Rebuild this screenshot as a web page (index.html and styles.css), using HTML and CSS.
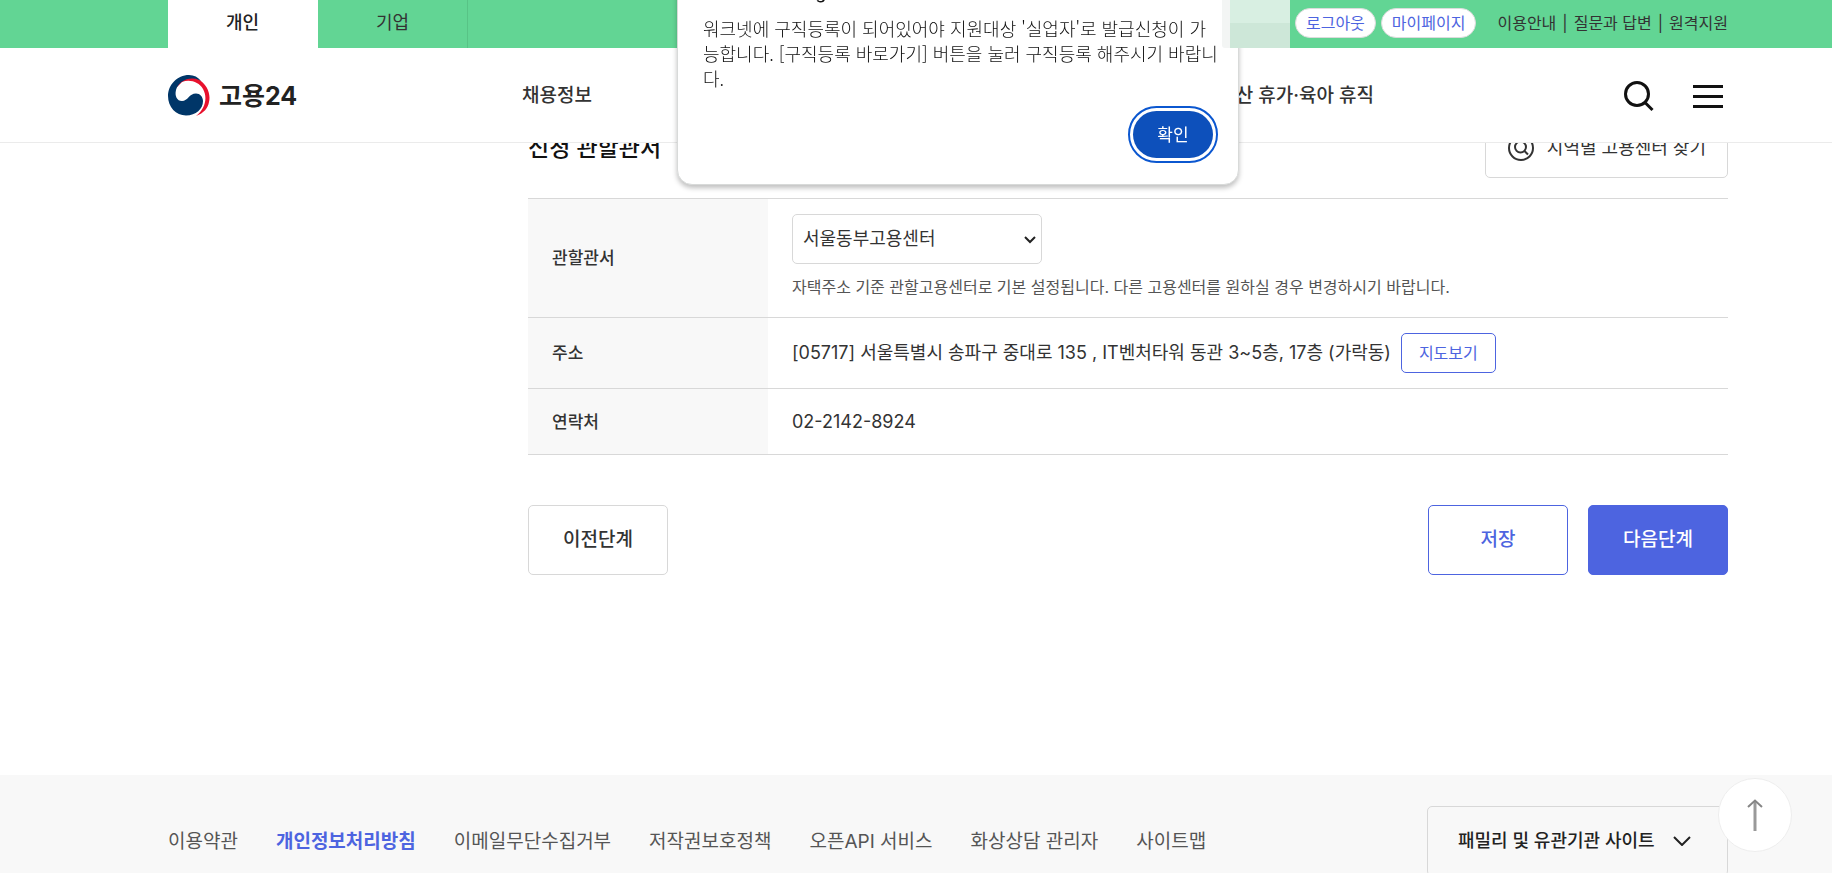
FILE: index.html
```html
<!DOCTYPE html>
<html lang="ko">
<head>
<meta charset="utf-8">
<meta name="viewport" content="width=device-width, initial-scale=1">
<title>고용24</title>
<link rel="stylesheet" href="styles.css">
</head>
<body>
<header class="header">
  <div class="topbar wrap">
    <nav class="tabs" aria-label="회원 구분">
      <a class="tab tab-active" href="#">개인</a>
      <a class="tab" href="#">기업</a>
    </nav>
    <div class="user-menu">
      <button class="pill" type="button">로그아웃</button>
      <button class="pill" type="button">마이페이지</button>
      <div class="util">
        <a href="#">이용안내</a><span>|</span><a href="#">질문과 답변</a><span>|</span><a href="#">원격지원</a>
      </div>
    </div>
  </div>
  <div class="gnb wrap">
    <a class="logo" href="#">
      <svg class="logo-mark" viewBox="0 0 42 42" aria-hidden="true">
        <path d="M7 14C10 4 21 0 30 4C39 9 43 19 41 27C40 33 36 38 28 41C37 34 40 23 35 14C31 7 22 4 14 7Z" fill="#e8112d"/>
        <path d="M21 0C9 0 0 10 0 21C0 32 8 40.500 18 40.500C28 40.500 35 34 35 26C35 22 32 18.500 28 18.500C21 18.500 20 26 14 26C9 26 6.500 21 8 15C10 8 17 3 25 3.500C29 3.700 31 5 33 6C30 2 26 0 21 0Z" fill="#003668"/>
      </svg>
      <span>고용24</span>
    </a>
    <nav class="menu" aria-label="주 메뉴">
      <a href="#">채용정보</a>
      <a href="#">출산 휴가·육아 휴직</a>
    </nav>
    <div class="tools">
      <button class="icon-btn" type="button" aria-label="검색">
        <svg width="32" height="32" viewBox="0 0 32 32" fill="none" stroke="#111" stroke-width="3"><circle cx="14" cy="14" r="11.500"/><path d="M22 22.500L29.500 30"/></svg>
      </button>
      <button class="icon-btn" type="button" aria-label="전체메뉴">
        <svg width="30" height="26" viewBox="0 0 30 26" fill="none" stroke="#111" stroke-width="3"><path d="M0 3.500H30M0 13.500H30M0 23.500H30"/></svg>
      </button>
    </div>
  </div>
</header>

<main class="main">
  <div class="section-head">
    <h2>신청 관할관서</h2>
    <button class="find-btn" type="button">
      <svg width="26" height="26" viewBox="0 0 26 26" fill="none" stroke="#333" stroke-width="2"><circle cx="13" cy="13" r="12"/><circle cx="12.500" cy="12" r="5.500"/><path d="M16.500 16L20 19.500"/></svg>
      지역별 고용센터 찾기
    </button>
  </div>
  <table class="info">
    <tbody>
      <tr>
        <th scope="row"><label for="center">관할관서</label></th>
        <td class="cell-center">
          <div class="select-box">
            <select id="center"><option>서울동부고용센터</option></select>
            <svg class="select-arrow" width="12" height="8" viewBox="0 0 12 8" fill="none" stroke="#222" stroke-width="2"><path d="M1 1L6 6L11 1"/></svg>
          </div>
          <p class="help">자택주소 기준 관할고용센터로 기본 설정됩니다. 다른 고용센터를 원하실 경우 변경하시기 바랍니다.</p>
        </td>
      </tr>
      <tr>
        <th scope="row">주소</th>
        <td class="cell-address"><div class="address"><span>[05717] 서울특별시 송파구 중대로 135 , IT벤처타워 동관 3~5층, 17층 (가락동)</span><button class="map-btn" type="button">지도보기</button></div></td>
      </tr>
      <tr>
        <th scope="row">연락처</th>
        <td class="cell-phone">02-2142-8924</td>
      </tr>
    </tbody>
  </table>
  <div class="actions">
    <button class="btn" type="button">이전단계</button>
    <div class="actions-right">
      <button class="btn btn-line" type="button">저장</button>
      <button class="btn btn-fill" type="button">다음단계</button>
    </div>
  </div>
</main>

<footer class="footer">
  <nav class="footer-links" aria-label="하단 메뉴">
    <a href="#">이용약관</a>
    <a class="privacy" href="#">개인정보처리방침</a>
    <a href="#">이메일무단수집거부</a>
    <a href="#">저작권보호정책</a>
    <a href="#">오픈API 서비스</a>
    <a href="#">화상상담 관리자</a>
    <a href="#">사이트맵</a>
  </nav>
  <button class="family" type="button">패밀리 및 유관기관 사이트
    <svg width="18" height="10" viewBox="0 0 18 10" fill="none" stroke="#222" stroke-width="2"><path d="M1 1L9 9L17 1"/></svg>
  </button>
</footer>

<button class="to-top" type="button" aria-label="맨 위로">
  <svg width="16" height="32" viewBox="0 0 16 32" fill="none"><path d="M8 2V32" stroke="#999" stroke-width="3"/><path d="M1 8L8 1.500L15 8" stroke="#858585" stroke-width="2"/></svg>
</button>

<div class="dialog" role="alertdialog" aria-labelledby="dialog-title" aria-describedby="dialog-text">
  <h1 id="dialog-title">www.work24.go.kr</h1>
  <p id="dialog-text">워크넷에 구직등록이 되어있어야 지원대상 '실업자'로 발급신청이 가<br>능합니다. [구직등록 바로가기] 버튼을 눌러 구직등록 해주시기 바랍니<br>다.</p>
  <button class="confirm" type="button">확인</button>
</div>
<div class="masked" aria-hidden="true"></div>
</body>
</html>
```
FILE: styles.css
```css
* { box-sizing: border-box; }
html { scrollbar-width: none; }
body {
  margin: 0;
  min-height: 100vh;
  background: #fff;
  color: #333;
  font-family: Inter, "Noto Sans CJK KR", sans-serif;
  font-size: 17px;
  line-height: 24px;
}
a { color: inherit; text-decoration: none; }
button, select { font: inherit; color: inherit; cursor: pointer; }
button { padding: 0; border: 0; background: none; }
svg { flex: none; }
h1, h2, p { margin: 0; }

.wrap { padding: 0 104px 0 168px; }
.header {
  position: fixed;
  top: 0;
  left: 0;
  right: 0;
  z-index: 10;
  background: #fff;
  border-bottom: 1px solid #ebebeb;
}
.topbar {
  display: flex;
  justify-content: space-between;
  height: 48px;
  background: #62d594;
}
.tabs { display: flex; }
.tab {
  width: 150px;
  border-right: 1px solid #58c386;
  font-size: 18px;
  line-height: 46px;
  text-align: center;
}
.tab-active { background: #fff; border-color: #fff; color: #222; font-weight: 500; }
.user-menu { display: flex; align-items: center; gap: 5px; padding-bottom: 2px; font-size: 16px; }
.pill {
  height: 30px;
  padding: 0 10px;
  border: 1px solid #dcdcdc;
  border-radius: 15px;
  background: #fff;
  color: #4d64e0;
}
.util { display: flex; gap: 6px; padding-left: 16px; }

.gnb { display: flex; align-items: center; height: 94px; padding-top: 2px; }
.logo {
  display: flex;
  align-items: center;
  gap: 9px;
  width: 354px;
  color: #222;
  font-size: 25px;
  font-weight: 700;
}
.logo-mark { width: 42px; height: 42px; }
.menu {
  display: flex;
  justify-content: space-between;
  width: 852px;
  font-size: 19px;
  font-weight: 500;
}
.tools { display: flex; align-items: center; gap: 38px; margin-left: auto; padding-right: 5px; }
.icon-btn { display: flex; }

.main { padding: 118px 104px 200px 528px; }
.section-head { display: flex; align-items: center; justify-content: space-between; height: 60px; margin-bottom: 20px; }
.section-head h2 { color: #111; font-size: 23px; font-weight: 500; }
.find-btn {
  display: flex;
  align-items: center;
  gap: 13px;
  height: 60px;
  padding: 0 21px 0 22px;
  border: 1px solid #d8d8d8;
  border-radius: 5px;
  font-size: 18px;
}

.info { width: 100%; border-collapse: collapse; border-top: 1px solid #d8d8d8; }
.info tr { border-bottom: 1px solid #d8d8d8; }
.info th { width: 240px; padding: 0 24px; background: #f8f8f8; font-weight: 500; text-align: left; }
.info td { padding: 15px 24px; font-size: 18px; }
.select-box { position: relative; width: 250px; }
.select-box select {
  display: block;
  width: 100%;
  height: 50px;
  padding: 0 10px;
  border: 1px solid #d8d8d8;
  border-radius: 5px;
  background: #fff;
  appearance: none;
}
.select-arrow { position: absolute; right: 6px; top: 22px; pointer-events: none; }
.info .help { margin-top: 11px; padding-bottom: 3px; color: #555; font-size: 16px; }
.address { display: flex; align-items: center; gap: 10px; }
.map-btn {
  height: 40px;
  padding: 0 17px;
  border: 1px solid #4d64e0;
  border-radius: 5px;
  color: #4d64e0;
  font-size: 16px;
}
.info .cell-phone { padding: 21px 24px 20px; }

.actions { display: flex; justify-content: space-between; margin-top: 50px; }
.actions-right { display: flex; gap: 20px; }
.btn {
  width: 140px;
  height: 70px;
  border: 1px solid #d8d8d8;
  border-radius: 5px;
  background: #fff;
  font-size: 19px;
  font-weight: 500;
}
.btn-line { border-color: #4d64e0; color: #4d64e0; }
.btn-fill { border-color: #4d64e0; background: #4d64e0; color: #fff; }

.footer {
  display: flex;
  align-items: flex-start;
  justify-content: space-between;
  padding: 31px 104px 0 168px;
  background: #f8f8f8;
}
.footer-links { display: flex; gap: 38px; padding: 24px 0; color: #555; font-size: 19px; }
.privacy { color: #4d64e0; font-weight: 700; }
.family {
  display: flex;
  align-items: center;
  justify-content: space-between;
  width: 301px;
  height: 70px;
  padding: 0 36px 0 30px;
  border: 1px solid #d8d8d8;
  border-radius: 5px;
  color: #222;
  font-size: 18px;
  font-weight: 500;
}
.to-top {
  position: fixed;
  right: 40px;
  bottom: 21px;
  display: flex;
  align-items: center;
  justify-content: center;
  width: 74px;
  height: 74px;
  border: 1px solid #ededed;
  border-radius: 50%;
  background: #fff;
}

.dialog {
  position: fixed;
  top: -35px;
  left: 677px;
  z-index: 20;
  width: 562px;
  padding: 15px 20px 20px 25px;
  border: 1px solid #d8dad9;
  border-radius: 15px;
  background: #fff;
  box-shadow: 0 3px 5px rgba(0, 0, 0, .25);
  color: #111;
}
.dialog h1 { margin-bottom: 11px; font-size: 17px; font-weight: 500; }
.dialog p { font-family: "Noto Sans CJK KR", sans-serif; font-size: 18px; font-weight: 300; line-height: 25px; white-space: nowrap; }
.confirm {
  display: block;
  width: 80px;
  height: 47px;
  margin: 20px 5px 6px auto;
  border-radius: 24px;
  outline: 2px solid #0b57d0;
  outline-offset: 3px;
  background: #0d50bb;
  color: #fff;
  font-size: 17px;
}
.masked {
  position: fixed;
  top: 0;
  left: 1222px;
  z-index: 30;
  width: 68px;
  height: 48px;
  border-left: 8px solid #f3f5f4;
  border-radius: 0 0 0 3px;
  background: linear-gradient(#d8efe2 23px, #cde7d8 23px);
}
```
